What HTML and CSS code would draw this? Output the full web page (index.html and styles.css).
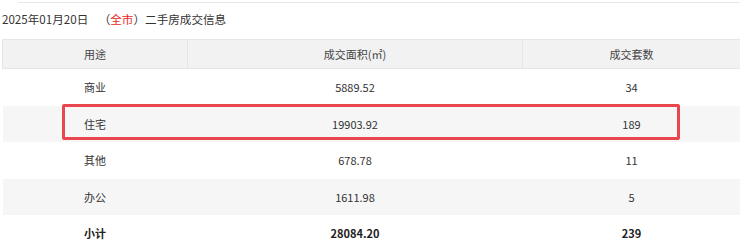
FILE: index.html
```html
<!DOCTYPE html>
<html lang="zh">
<head>
<meta charset="utf-8">
<link rel="stylesheet" href="styles.css">
</head>
<body>
<div class="page">
  <div class="topline"></div>
  <div class="title">2025年01月20日&nbsp;&nbsp;&nbsp;&nbsp;（<span class="city">全市</span>）二手房成交信息</div>
  <div class="tablewrap">
    <table class="deals">
      <colgroup>
        <col class="c1"><col class="c2"><col class="c3">
      </colgroup>
      <thead>
        <tr><th>用途</th><th>成交面积(㎡)</th><th>成交套数</th></tr>
      </thead>
      <tbody>
        <tr><td>商业</td><td>5889.52</td><td>34</td></tr>
        <tr class="alt"><td>住宅</td><td>19903.92</td><td>189</td></tr>
        <tr><td>其他</td><td>678.78</td><td>11</td></tr>
        <tr class="alt"><td>办公</td><td>1611.98</td><td>5</td></tr>
        <tr class="total"><td>小计</td><td>28084.20</td><td>239</td></tr>
      </tbody>
    </table>
    <div class="highlight"></div>
  </div>
</div>
</body>
</html>
```

FILE: styles.css
```css
html, body {
  margin: 0;
  padding: 0;
  background: #fff;
}
body {
  font-family: "Noto Sans CJK SC", "Noto Sans", sans-serif;
  color: #333;
  width: 740px;
  height: 249px;
  overflow: hidden;
}
.page {
  padding-top: 2px;
}
.topline {
  margin-left: 18px;
  border-top: 1px solid #e8e8e8;
}
.title {
  margin: 8px 0 0 2px;
  font-size: 11.6px;
  line-height: 16px;
  height: 16px;
  color: #333;
}
.city {
  color: #e8271e;
}
.tablewrap {
  position: relative;
  margin: 12px 0 0 2px;
}
.deals {
  width: 738px;
  border-collapse: collapse;
  table-layout: fixed;
  font-size: 11px;
}
.c1 { width: 185px; }
.c2 { width: 335px; }
.c3 { width: 218px; }
.deals th {
  background: #f2f2f2;
  border: 1px solid #e6e6e6;
  height: 28px;
  padding: 0;
  font-weight: normal;
  color: #444;
  text-align: center;
}
.deals td {
  height: 36.5px;
  padding: 0;
  text-align: center;
  color: #333;
}
.deals tr.alt td {
  background: #f6f6f6;
}
.deals tr.total td {
  font-weight: bold;
  color: #222;
}
.highlight {
  position: absolute;
  left: 60px;
  top: 65px;
  width: 612px;
  height: 30px;
  border: 3px solid #e9474d;
  border-radius: 2px;
}
```
